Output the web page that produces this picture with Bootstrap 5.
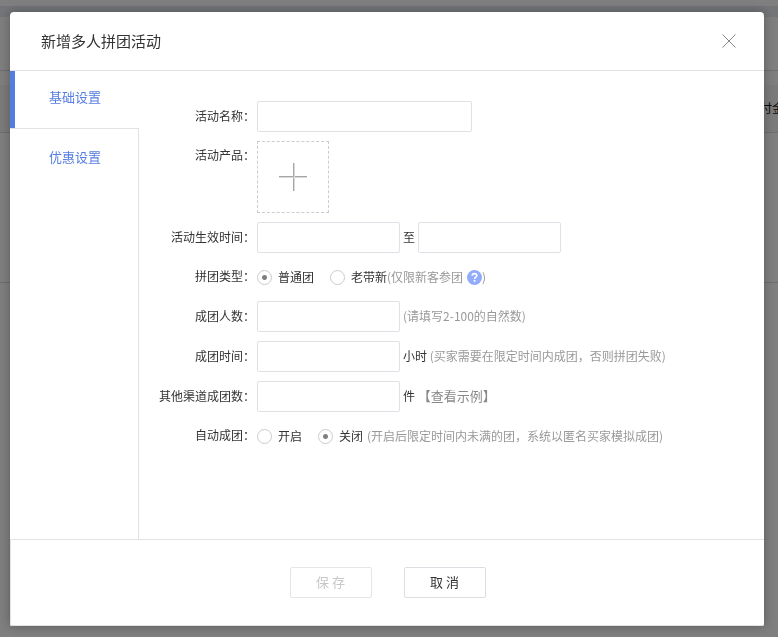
<!DOCTYPE html>
<html lang="zh-CN">
<head>
<meta charset="utf-8">
<meta name="viewport" content="width=device-width, initial-scale=1">
<title>新增多人拼团活动</title>
<link href="https://cdn.jsdelivr.net/npm/bootstrap@5.3.0/dist/css/bootstrap.min.css" rel="stylesheet">
<style>
  body { font-family: "Noto Sans CJK SC", sans-serif; font-size: 12px; line-height: 18px; color: #333; background: #fff; overflow: hidden; }
  .page-band { height: 11px; margin-top: 6px; background: #e6eaf0; }
  .page-list { min-width: 784px; margin-top: 53px; border-top: 1px solid #dcdce0; }
  .page-list th { height: 48px; padding: 0; background: #f7f7f9; color: #111; font-weight: 400; text-align: right; border-bottom: 1px solid #dcdce0; }
  .page-list td { height: 150px; border-bottom: 1px solid #dcdce0; }
  .page-list .list-space { height: 14px; border: 0; }

  .activity-modal { padding: 12px 14px 11px 10px; }
  .activity-modal .modal-dialog { max-width: none; height: 100%; }
  .activity-modal .modal-content { height: 100%; color: #333; border: 0; border-radius: 4px 4px 2px 2px; box-shadow: 0 0 12px rgba(0, 0, 0, .3); overflow: hidden; }
  .activity-modal .modal-header { padding: 0 28px 0 31px; height: 59px; border-color: #e1e1e6; border-radius: 0; }
  .activity-modal .modal-title { font-size: 15px; line-height: 22px; font-weight: 400; }
  .activity-modal .modal-footer { padding: 27px 0; gap: 32px; border: 1px solid #e1e1e6; border-right: 0; border-radius: 0; }
  .close-x { width: 14px; height: 14px; }

  .side-tabs { width: 129px; font-size: 13px; }
  .side-tabs .nav-link { color: #557ce0; border-radius: 0; padding: 0 0 0 39px; line-height: 20px; }
  .side-tabs .tab-on { height: 58px; padding-top: 16px; padding-left: 34px; background: linear-gradient(to right, #557ce0 5px, transparent 5px); padding-left: 39px; border-bottom: 1px solid #e1e1e6; }
  .side-rest { border-right: 1px solid #e1e1e6; }
  .side-rest .nav-link { padding-top: 18px; }

  .settings { padding: 30px 16px 16px 8px; gap: 9px; }
  .field-row { display: grid; grid-template-columns: 110px 1fr; min-height: 31px; }
  .radio-row { min-height: 30px; }
  .field-name { text-align: right; margin: 0 0 0 -8px; align-self: center; padding: 0 2px 2px 0; white-space: nowrap; }
  .name-top { align-self: start; padding-top: 5px; }
  .field-line { display: flex; align-items: center; gap: 3px; }
  .after-text { padding-bottom: 2px; }
  .field-row .form-control { width: 143px; height: 31px; padding: 4px 8px; border: 1px solid #e0e0e6; border-radius: 2px; font-size: 12px; }
  .field-row .field-wide { width: 215px; }
  .hint { color: #999; }
  .example-link { color: #888; font-size: 13px; text-decoration: none; }
  .upload-box { width: 72px; height: 72px; border: 1px dashed #ccc; background: #fff; }
  .form-check-input.dot-radio { width: 15px; height: 15px; margin: 0; border: 1px solid #ccc; }
  .form-check-input.dot-radio:checked { background: #fff radial-gradient(circle, #808080 2px, transparent 3px) center / 15px 15px no-repeat; border-color: #ccc; }
  .radio-gap { gap: 6px; }
  .help-btn { width: 15px; height: 15px; }
  .foot-btn { width: 82px; height: 31px; padding: 0 0 2px; margin: 0; font-size: 13px; line-height: 20px; color: #333; background: #fff; border: 1px solid #dddde3; border-radius: 2px; }
  .foot-btn:disabled { color: #c8c8c8; border-color: #e6e6ea; opacity: 1; }
</style>
</head>
<body>
<div class="overflow-hidden">
  <div class="page-band"></div>
  <table class="page-list">
    <thead>
      <tr><td class="list-space"></td></tr>
      <tr><th>付金</th></tr>
    </thead>
    <tbody><tr><td></td></tr></tbody>
  </table>
</div>

<div class="modal-backdrop show"></div>
<div class="modal d-block activity-modal" tabindex="-1" role="dialog" aria-labelledby="dlgTitle">
  <div class="modal-dialog m-0">
    <div class="modal-content">
      <div class="modal-header flex-shrink-0">
        <h1 class="modal-title" id="dlgTitle">新增多人拼团活动</h1>
        <button type="button" class="btn p-0 border-0 d-flex" aria-label="关闭">
          <svg class="close-x" viewBox="0 0 14 14" fill="none" stroke="#888" stroke-width="1"><path d="M.5.5l13 13M13.5.5l-13 13"/></svg>
        </button>
      </div>

      <div class="modal-body p-0 d-flex">
        <nav class="side-tabs nav flex-column flex-nowrap flex-shrink-0">
          <a class="nav-link tab-on" href="#basic">基础设置</a>
          <div class="side-rest flex-grow-1"><a class="nav-link" href="#discount">优惠设置</a></div>
        </nav>

        <form class="settings d-flex flex-column flex-grow-1" id="basic">
          <div class="field-row">
            <label class="field-name" for="actName">活动名称：</label>
            <input class="form-control field-wide" id="actName" type="text">
          </div>
          <div class="field-row">
            <label class="field-name name-top" for="addProduct">活动产品：</label>
            <button type="button" class="upload-box p-0 d-flex align-items-center justify-content-center" id="addProduct" aria-label="添加产品">
              <svg width="28" height="28" viewBox="0 0 28 28" shape-rendering="crispEdges"><path d="M14 0h1v28h-1zM0 13h28v1H0z" fill="#a6a6a6"/><path d="M15 0h1v28h-1zM0 14h28v1H0z" fill="#dadada"/></svg>
            </button>
          </div>
          <div class="field-row">
            <label class="field-name" for="dateFrom">活动生效时间：</label>
            <div class="field-line">
              <input class="form-control" id="dateFrom" type="text">
              <label class="after-text" for="dateTo">至</label>
              <input class="form-control" id="dateTo" type="text">
            </div>
          </div>
          <div class="field-row radio-row" role="radiogroup" aria-labelledby="typeName">
            <span class="field-name" id="typeName">拼团类型：</span>
            <div class="d-flex align-items-center">
              <label class="d-flex align-items-center radio-gap me-3"><input class="form-check-input dot-radio" type="radio" name="type" checked>普通团</label>
              <label class="d-flex align-items-center radio-gap"><input class="form-check-input dot-radio" type="radio" name="type">老带新</label>
              <span class="hint me-1">(仅限新客参团</span>
              <button type="button" class="btn p-0 border-0 d-flex" aria-label="帮助">
                <svg class="help-btn" viewBox="0 0 15 15" fill="none"><circle cx="7.5" cy="7.5" r="7.5" fill="#93abfb"/><path d="M5.2 5.8C5.2 4.3 6.2 3.6 7.5 3.6s2.3.8 2.3 2c0 1.5-2.2 1.6-2.2 3.3" stroke="#fff" stroke-width="1.6"/><path d="M6.7 10h1.8v1.7H6.7z" fill="#fff"/></svg>
              </button>
              <span class="hint">)</span>
            </div>
          </div>
          <div class="field-row">
            <label class="field-name" for="people">成团人数：</label>
            <div class="field-line">
              <input class="form-control" id="people" type="text">
              <span class="hint after-text">(请填写2-100的自然数)</span>
            </div>
          </div>
          <div class="field-row">
            <label class="field-name" for="hours">成团时间：</label>
            <div class="field-line">
              <input class="form-control" id="hours" type="text">
              <span class="after-text">小时 <span class="hint">(买家需要在限定时间内成团，否则拼团失败)</span></span>
            </div>
          </div>
          <div class="field-row">
            <label class="field-name" for="others">其他渠道成团数：</label>
            <div class="field-line">
              <input class="form-control" id="others" type="text">
              <span class="after-text">件 <a class="example-link" href="#example">【查看示例】</a></span>
            </div>
          </div>
          <div class="field-row radio-row" role="radiogroup" aria-labelledby="autoName">
            <span class="field-name" id="autoName">自动成团：</span>
            <div class="d-flex align-items-center">
              <label class="d-flex align-items-center radio-gap me-3"><input class="form-check-input dot-radio" type="radio" name="auto">开启</label>
              <label class="d-flex align-items-center radio-gap me-1"><input class="form-check-input dot-radio" type="radio" name="auto" checked>关闭</label>
              <span class="hint">(开启后限定时间内未满的团，系统以匿名买家模拟成团)</span>
            </div>
          </div>
        </form>
      </div>

      <div class="modal-footer flex-shrink-0 justify-content-center">
        <button type="button" class="btn foot-btn" disabled>保 存</button>
        <button type="button" class="btn foot-btn">取 消</button>
      </div>
    </div>
  </div>
</div>
<script src="https://cdn.jsdelivr.net/npm/bootstrap@5.3.0/dist/js/bootstrap.bundle.min.js"></script>
</body>
</html>
